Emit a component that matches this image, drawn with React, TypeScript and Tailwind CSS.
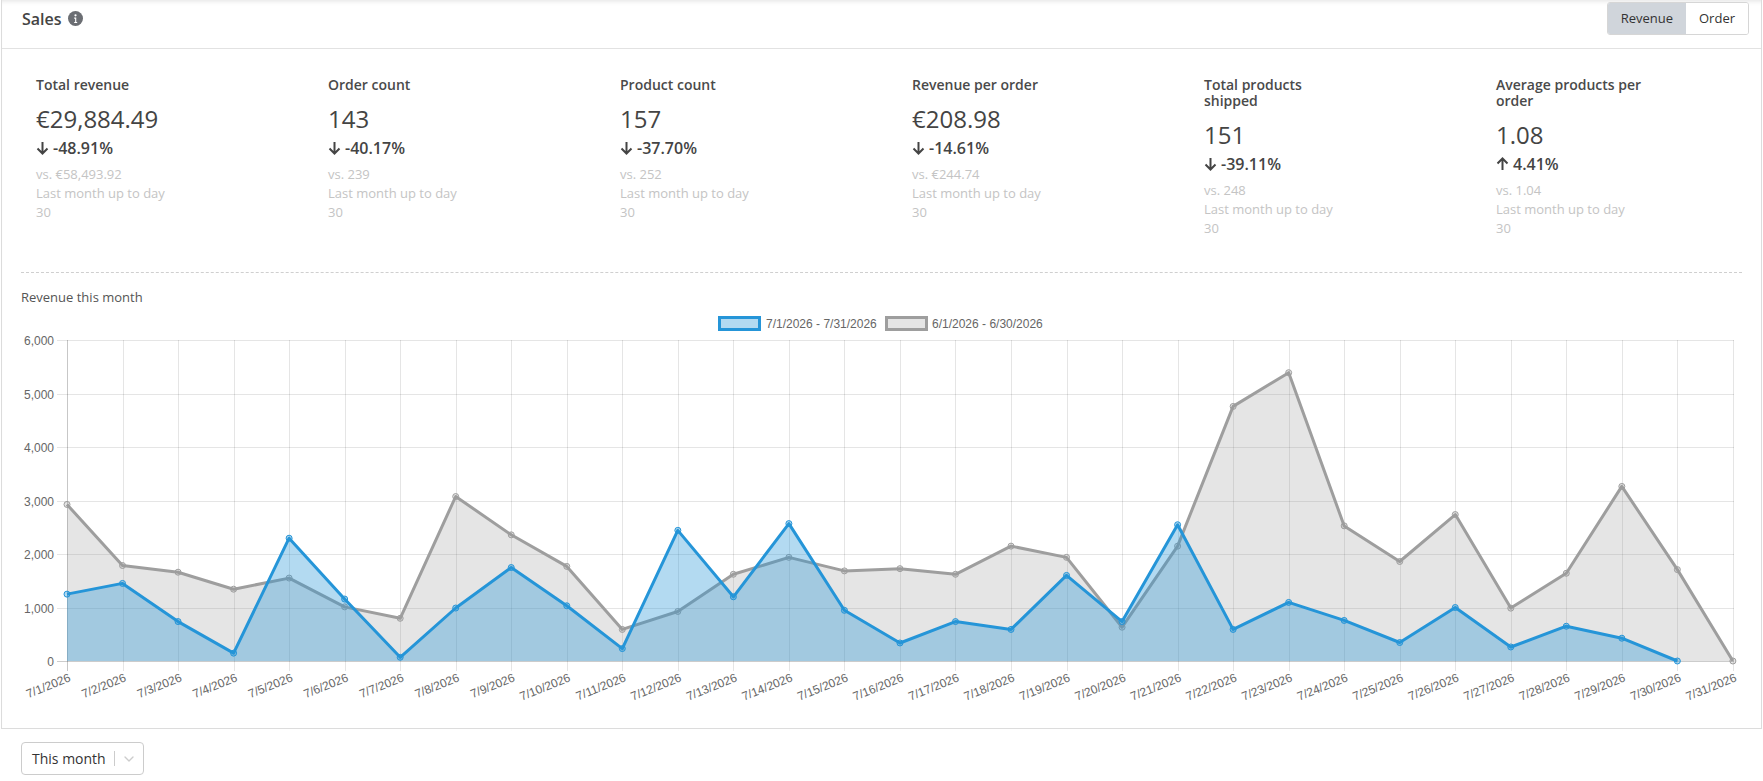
import { ChevronDown } from 'lucide-react';

type Stat = {
  label: string;
  value: string;
  change: string;
  up?: boolean;
  prev: string;
};

const STATS: Stat[] = [
  { label: 'Total revenue', value: '€29,884.49', change: '-48.91%', prev: 'vs. €58,493.92' },
  { label: 'Order count', value: '143', change: '-40.17%', prev: 'vs. 239' },
  { label: 'Product count', value: '157', change: '-37.70%', prev: 'vs. 252' },
  { label: 'Revenue per order', value: '€208.98', change: '-14.61%', prev: 'vs. €244.74' },
  { label: 'Total products shipped', value: '151', change: '-39.11%', prev: 'vs. 248' },
  { label: 'Average products per order', value: '1.08', change: '4.41%', up: true, prev: 'vs. 1.04' },
];

// daily revenue, current month (ends on the 30th) and previous month
const CURRENT = [
  1250, 1450, 737, 147, 2295, 1158, 70, 990, 1747, 1032, 232, 2442, 1200, 2568, 947, 337, 737, 590,
  1600, 737, 2547, 590, 1095, 758, 345, 1000, 262, 650, 426, 0,
];
const PREVIOUS = [
  2926, 1785, 1660, 1342, 1550, 1012, 798, 3074, 2358, 1768, 590, 926, 1621, 1937, 1684, 1726, 1621,
  2147, 1937, 632, 2147, 4758, 5389, 2526, 1860, 2737, 988, 1640, 3263, 1708, 0,
];

const X0 = 67;
const STEP = 55.53;
const Y0 = 661;
const PER = 0.0535;

const BLUE = '#2595d8';
const BLUE_FILL = 'rgba(37,149,216,0.35)';
const GRAY = '#9e9e9e';
const GRAY_FILL = 'rgba(153,153,153,0.25)';

const px = (i: number) => X0 + i * STEP;
const py = (v: number) => Y0 - v * PER;

function linePath(values: number[]) {
  return values
    .map((v, i) => `${i === 0 ? 'M' : 'L'}${px(i).toFixed(1)} ${py(v).toFixed(1)}`)
    .join(' ');
}

function areaPath(values: number[]) {
  return `${linePath(values)} L${px(values.length - 1).toFixed(1)} ${Y0} L${X0} ${Y0} Z`;
}

function InfoIcon() {
  return (
    <svg width="15" height="15" viewBox="0 0 16 16" aria-hidden>
      <circle cx="8" cy="8" r="8" fill="#6b6e73" />
      <circle cx="8" cy="4.6" r="1.2" fill="#fff" />
      <path d="M6.6 7h2.2v4.6h1v1.2H6.6v-1.2h1V8.2h-1z" fill="#fff" />
    </svg>
  );
}

function TrendArrow({ up }: { up?: boolean }) {
  return (
    <svg width="13" height="14" viewBox="0 0 13 14" aria-hidden className="shrink-0">
      {up ? (
        <path d="M6.5 13V1.5M1.5 6.5l5-5 5 5" fill="none" stroke="#444" strokeWidth="2" />
      ) : (
        <path d="M6.5 1v11.5M1.5 7.5l5 5 5-5" fill="none" stroke="#444" strokeWidth="2" />
      )}
    </svg>
  );
}

function StatColumn({ stat }: { stat: Stat }) {
  return (
    <div className="flex flex-col">
      <div className="w-[151px] text-[14px] font-semibold leading-[16px] text-[#4a4a4a]">
        {stat.label}
      </div>
      <div className="mt-[11px] text-[24px] leading-[30px] text-[#444]">{stat.value}</div>
      <div className="mt-[3px] flex items-center gap-[4px] text-[16px] font-semibold leading-[22px] text-[#444]">
        <TrendArrow up={stat.up} />
        <span>{stat.change}</span>
      </div>
      <div className="mt-[6px] w-[143px] text-[13px] leading-[19px] text-[#c4c4c4]">
        <div>{stat.prev}</div>
        <div>Last month up to day 30</div>
      </div>
    </div>
  );
}

function RevenueChart() {
  const yTicks = [0, 1000, 2000, 3000, 4000, 5000, 6000];
  const days = Array.from({ length: 31 }, (_, i) => i);

  return (
    <svg
      width={1759}
      height={420}
      viewBox="2 308 1759 420"
      className="block font-['Liberation_Sans',Arial,sans-serif]"
    >
      {/* legend */}
      <rect x={719.5} y={317.5} width={40} height={12} fill={BLUE_FILL} stroke={BLUE} strokeWidth={3} />
      <text x={766} y={324} fontSize={12} fill="#666" dominantBaseline="central">
        7/1/2026 - 7/31/2026
      </text>
      <rect x={886.5} y={317.5} width={40} height={12} fill={GRAY_FILL} stroke={GRAY} strokeWidth={3} />
      <text x={932} y={324} fontSize={12} fill="#666" dominantBaseline="central">
        6/1/2026 - 6/30/2026
      </text>

      {/* grid */}
      {yTicks.map(v => {
        const y = Math.round(py(v)) + 0.5;
        return (
          <g key={v}>
            <line
              x1={57}
              x2={1734}
              y1={y}
              y2={y}
              stroke={v === 0 ? 'rgba(0,0,0,0.2)' : 'rgba(0,0,0,0.1)'}
            />
            <text x={54} y={y} fontSize={12} fill="#666" textAnchor="end" dominantBaseline="central">
              {v.toLocaleString('en-US')}
            </text>
          </g>
        );
      })}
      {days.map(i => {
        const x = Math.round(px(i)) + 0.5;
        return (
          <line
            key={i}
            x1={x}
            x2={x}
            y1={340}
            y2={671}
            stroke={i === 0 ? 'rgba(0,0,0,0.22)' : 'rgba(0,0,0,0.1)'}
          />
        );
      })}

      {/* previous month */}
      <path d={areaPath(PREVIOUS)} fill={GRAY_FILL} />
      <path d={linePath(PREVIOUS)} fill="none" stroke={GRAY} strokeWidth={3} strokeLinejoin="round" />
      {PREVIOUS.map((v, i) => (
        <circle key={i} cx={px(i)} cy={py(v)} r={3} fill={GRAY_FILL} stroke={GRAY} strokeWidth={1} />
      ))}

      {/* current month */}
      <path d={areaPath(CURRENT)} fill={BLUE_FILL} />
      <path d={linePath(CURRENT)} fill="none" stroke={BLUE} strokeWidth={3} strokeLinejoin="round" />
      {CURRENT.map((v, i) => (
        <circle key={i} cx={px(i)} cy={py(v)} r={3} fill={BLUE_FILL} stroke={BLUE} strokeWidth={1} />
      ))}

      {/* x labels */}
      {days.map(i => (
        <text
          key={i}
          transform={`translate(${(px(i) + 3).toFixed(1)} 677) rotate(-22)`}
          fontSize={12}
          fill="#666"
          textAnchor="end"
          dominantBaseline="central"
        >
          {`7/${i + 1}/2026`}
        </text>
      ))}
    </svg>
  );
}

export default function App() {
  return (
    <div className="min-h-[781px] bg-white font-['Open_Sans',sans-serif] text-[#444]">
      <div className="mx-px border-x border-b border-[#dcdcdc] shadow-[inset_0_5px_5px_-4px_rgba(0,0,0,0.12)]">
        <div className="flex h-[49px] items-center justify-between border-b border-[#e2e2e2] pb-[13px] pl-5 pr-3 pt-[2px]">
          <div className="flex items-center gap-[6px]">
            <span className="text-[16px] font-semibold text-[#444]">Sales</span>
            <InfoIcon />
          </div>
          <div className="flex h-[33px] overflow-hidden rounded-[3px] border border-[#d6d6d6] text-[13px] text-[#333]">
            <button type="button" className="bg-[#d0d5db] px-[13px]">
              Revenue
            </button>
            <button type="button" className="bg-white px-[13px]">
              Order
            </button>
          </div>
        </div>

        <div className="grid h-[223px] grid-cols-[repeat(6,292px)] pl-[34px] pt-[28px]">
          {STATS.map(stat => (
            <StatColumn key={stat.label} stat={stat} />
          ))}
        </div>

        <div className="mx-[19px] border-t border-dashed border-[#cfcfcf]" />

        <div className="ml-[19px] mt-[15px] text-[13px] leading-[18px] text-[#555]">
          Revenue this month
        </div>

        <div className="mt-[2px]">
          <RevenueChart />
        </div>
      </div>

      <div className="ml-[21px] mt-[13px] flex h-[33px] w-[123px] items-center rounded-[4px] border border-[#cccccc] text-[14px] text-[#333]">
        <span className="pl-[10px]">This month</span>
        <span className="ml-auto h-[15px] w-px bg-[#cccccc]" />
        <ChevronDown size={16} strokeWidth={2} className="mx-[6px] text-[#cccccc]" />
      </div>
    </div>
  );
}
